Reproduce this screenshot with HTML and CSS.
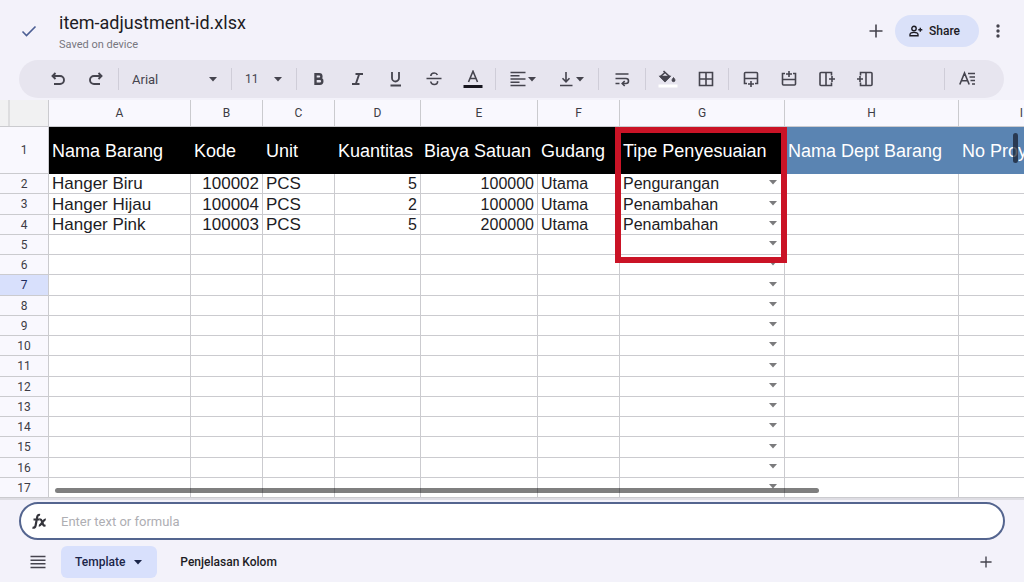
FILE: index.html
```html
<!DOCTYPE html>
<html lang="id">
<head>
<meta charset="utf-8">
<meta name="viewport" content="width=device-width, initial-scale=1">
<title>item-adjustment-id.xlsx</title>
<link rel="stylesheet" href="styles.css">
</head>
<body>
<svg class="defs" aria-hidden="true">
  <symbol id="caret" viewBox="0 0 10 5"><path d="M1 0h8L5 4.600z" fill="currentColor"/></symbol>
  <symbol id="plus" viewBox="0 0 14 14"><path d="M7 .5v13M.5 7h13"/></symbol>
</svg>

<header class="topbar">
  <button class="icon-btn done" aria-label="Done"><svg class="icon" viewBox="0 0 16 16"><path d="M1.500 8.500l4 4L14.500 3.500"/></svg></button>
  <div class="file">
    <h1 class="file-name">item-adjustment-id.xlsx</h1>
    <p class="file-status">Saved on device</p>
  </div>
  <button class="icon-btn" aria-label="Insert"><svg class="icon plus"><use href="#plus"/></svg></button>
  <button class="share">
    <svg class="icon share-icon" viewBox="0 0 14 12"><circle cx="5" cy="3.500" r="2.200"/><path d="M1 10.800V9.600C1 8.200 3 7.400 5 7.400s4 .8 4 2.200v1.200zM11.300 2.800v4M9.300 4.800h4"/></svg>
    <span>Share</span>
  </button>
  <button class="icon-btn more" aria-label="More options"><svg class="icon" viewBox="0 0 16 16"><g fill="currentColor" stroke="none"><circle cx="8" cy="3" r="1.700"/><circle cx="8" cy="8" r="1.700"/><circle cx="8" cy="13" r="1.700"/></g></svg></button>
</header>

<div class="toolbar" role="toolbar" aria-label="Formatting">
  <button class="tool" aria-label="Undo"><svg class="icon" viewBox="0 0 16 16"><path stroke-width="1.900" d="M5.500 2L2.500 5l3 3M2.500 5H10a4 4 0 0 1 0 8H4"/></svg></button>
  <button class="tool" aria-label="Redo"><svg class="icon" viewBox="0 0 16 16"><path stroke-width="1.900" d="M10.500 2l3 3-3 3M13.500 5H6a4 4 0 0 0 0 8h6"/></svg></button>
  <span class="sep"></span>
  <div class="picker font"><select aria-label="Font"><option>Arial</option></select><svg class="caret"><use href="#caret"/></svg></div>
  <span class="sep"></span>
  <div class="picker size"><select aria-label="Font size"><option>11</option></select><svg class="caret"><use href="#caret"/></svg></div>
  <span class="sep"></span>
  <div class="styles">
    <button class="tool" aria-label="Bold"><svg class="icon" viewBox="0 0 16 16"><path stroke-width="2.400" d="M4.500 3.300h3.700a2.200 2.200 0 0 1 0 4.400H4.500zM4.500 7.700h4.300a2.500 2.500 0 0 1 0 5H4.500z"/></svg></button>
    <button class="tool" aria-label="Italic"><svg class="icon" viewBox="0 0 16 16"><path stroke-width="1.900" d="M5.500 3H13M2 13h7.500M9.200 3l-3.400 10"/></svg></button>
    <button class="tool" aria-label="Underline"><svg class="icon" viewBox="0 0 16 16"><path stroke-width="1.800" d="M4 1v6a3.500 3.500 0 0 0 7 0V1M2.500 14.500H13"/></svg></button>
    <button class="tool" aria-label="Strikethrough"><svg class="icon" viewBox="0 0 16 16"><path d="M.5 7.500h15M4.800 5C5 3 6.300 2 8.200 2c1.600 0 2.700.7 3.200 2M4.700 10.500c.3 2 1.700 3 3.600 3 2.200 0 3.600-1.300 3.200-3.300"/></svg></button>
    <button class="tool" aria-label="Text colour"><svg class="icon text-colour" viewBox="0 0 20 18"><path d="M5.500 12L10 1.300 14.500 12M7 8.500h6"/><path stroke="#17161f" stroke-width="3" d="M.5 16.500h19"/></svg></button>
  </div>
  <span class="sep"></span>
  <button class="tool menu" aria-label="Horizontal align"><svg class="icon" viewBox="0 0 16 16"><path d="M.5 1.500h15M.5 4.700h9M.5 8h15M.5 11.200h9M.5 14.500h15"/></svg><svg class="caret"><use href="#caret"/></svg></button>
  <button class="tool menu" aria-label="Vertical align"><svg class="icon" viewBox="0 0 16 16"><path d="M8 1v9.500M4.500 7.300L8 10.800l3.500-3.500M2 14.500h12.500"/></svg><svg class="caret"><use href="#caret"/></svg></button>
  <span class="sep"></span>
  <button class="tool wrap" aria-label="Text wrapping"><svg class="icon" viewBox="0 0 16 16"><path d="M1.500 3h13M1.500 7.500H12a2.500 2.500 0 0 1 0 5H8.500M1.500 12.500h4M10.700 10l-2.500 2.500 2.500 2.500"/></svg></button>
  <span class="sep"></span>
  <button class="tool" aria-label="Fill colour"><svg class="icon fill" viewBox="0 0 20 18"><path d="M5.500 1l6 5.500-4.500 4.500-4.500-4.500L7 2.500" stroke-width="1.600"/><path d="M2.500 6.500h9L7 11z" fill="currentColor"/><path d="M15.500 7.500c1 1.300 1.500 2 1.500 2.700a1.500 1.500 0 0 1-3 0c0-.7.5-1.400 1.500-2.700z" fill="currentColor" stroke-width=".8"/><path stroke="#fff" stroke-width="3" d="M.5 16h19"/></svg></button>
  <button class="tool" aria-label="Borders"><svg class="icon" viewBox="0 0 16 16"><path d="M1.500 1.500h13v13h-13zM8 1.500v13M1.500 8h13"/></svg></button>
  <span class="sep"></span>
  <button class="tool" aria-label="Insert row below"><svg class="icon" viewBox="0 0 16 16"><path d="M4 12.500H1.500v-10q0-1 1-1h11q1 0 1 1v10H12M1.500 7.500h13M8 10v6M5 13h6"/></svg></button>
  <button class="tool" aria-label="Insert row above"><svg class="icon" viewBox="0 0 16 16"><path d="M4 2.500H1.500v10.500q0 1 1 1h11q1 0 1-1V2.500H12M1.500 8.500h13M8 0v6M5 3h6"/></svg></button>
  <button class="tool" aria-label="Insert column right"><svg class="icon" viewBox="0 0 16 16"><path d="M12.500 4.500v-3H2q-1 0-1 1v11q0 1 1 1h10.500v-3M7 1.500v13M10 8h6M13 5v6"/></svg></button>
  <button class="tool" aria-label="Insert column left"><svg class="icon" viewBox="0 0 16 16"><path d="M3.500 4.500v-3H14q1 0 1 1v11q0 1-1 1H3.500v-3M9 1.500v13M0 8h6M3 5v6"/></svg></button>
  <span class="sep last"></span>
  <button class="tool" aria-label="Text format"><svg class="icon" viewBox="0 0 16 16"><path d="M.8 13.500L5.500 2l4.700 11.500M2.500 9.800h6M9 2.500h7M10.500 6h5.500M11.500 9.500H16M13 13h3" /></svg></button>
</div>

<main class="sheet">
  <table class="grid">
    <colgroup><col class="c-num"><col class="c-a"><col class="c-b"><col class="c-b"><col class="c-d"><col class="c-e"><col class="c-f"><col class="c-g"><col class="c-h"><col class="c-i"></colgroup>
    <thead>
      <tr><td class="corner"></td><th>A</th><th>B</th><th>C</th><th>D</th><th>E</th><th>F</th><th>G</th><th>H</th><th>I</th></tr>
    </thead>
    <tbody>
      <tr class="titles"><th>1</th><td>Nama Barang</td><td>Kode</td><td>Unit</td><td>Kuantitas</td><td>Biaya Satuan</td><td>Gudang</td><td>Tipe Penyesuaian</td><td class="optional">Nama Dept Barang</td><td class="optional">No Proyek</td></tr>
      <tr><th>2</th><td class="big">Hanger Biru</td><td class="big num">100002</td><td class="big">PCS</td><td class="num">5</td><td class="num">100000</td><td>Utama</td><td><button class="choice">Pengurangan<svg class="caret"><use href="#caret"/></svg></button></td><td></td><td></td></tr>
      <tr><th>3</th><td class="big">Hanger Hijau</td><td class="big num">100004</td><td class="big">PCS</td><td class="num">2</td><td class="num">100000</td><td>Utama</td><td><button class="choice">Penambahan<svg class="caret"><use href="#caret"/></svg></button></td><td></td><td></td></tr>
      <tr><th>4</th><td class="big">Hanger Pink</td><td class="big num">100003</td><td class="big">PCS</td><td class="num">5</td><td class="num">200000</td><td>Utama</td><td><button class="choice">Penambahan<svg class="caret"><use href="#caret"/></svg></button></td><td></td><td></td></tr>
      <tr><th>5</th><td></td><td></td><td></td><td></td><td></td><td></td><td><button class="choice" aria-label="Choose"><svg class="caret"><use href="#caret"/></svg></button></td><td></td><td></td></tr>
      <tr><th>6</th><td></td><td></td><td></td><td></td><td></td><td></td><td><button class="choice" aria-label="Choose"><svg class="caret"><use href="#caret"/></svg></button></td><td></td><td></td></tr>
      <tr><th class="active">7</th><td></td><td></td><td></td><td></td><td></td><td></td><td><button class="choice" aria-label="Choose"><svg class="caret"><use href="#caret"/></svg></button></td><td></td><td></td></tr>
      <tr><th>8</th><td></td><td></td><td></td><td></td><td></td><td></td><td><button class="choice" aria-label="Choose"><svg class="caret"><use href="#caret"/></svg></button></td><td></td><td></td></tr>
      <tr><th>9</th><td></td><td></td><td></td><td></td><td></td><td></td><td><button class="choice" aria-label="Choose"><svg class="caret"><use href="#caret"/></svg></button></td><td></td><td></td></tr>
      <tr><th>10</th><td></td><td></td><td></td><td></td><td></td><td></td><td><button class="choice" aria-label="Choose"><svg class="caret"><use href="#caret"/></svg></button></td><td></td><td></td></tr>
      <tr><th>11</th><td></td><td></td><td></td><td></td><td></td><td></td><td><button class="choice" aria-label="Choose"><svg class="caret"><use href="#caret"/></svg></button></td><td></td><td></td></tr>
      <tr><th>12</th><td></td><td></td><td></td><td></td><td></td><td></td><td><button class="choice" aria-label="Choose"><svg class="caret"><use href="#caret"/></svg></button></td><td></td><td></td></tr>
      <tr><th>13</th><td></td><td></td><td></td><td></td><td></td><td></td><td><button class="choice" aria-label="Choose"><svg class="caret"><use href="#caret"/></svg></button></td><td></td><td></td></tr>
      <tr><th>14</th><td></td><td></td><td></td><td></td><td></td><td></td><td><button class="choice" aria-label="Choose"><svg class="caret"><use href="#caret"/></svg></button></td><td></td><td></td></tr>
      <tr><th>15</th><td></td><td></td><td></td><td></td><td></td><td></td><td><button class="choice" aria-label="Choose"><svg class="caret"><use href="#caret"/></svg></button></td><td></td><td></td></tr>
      <tr><th>16</th><td></td><td></td><td></td><td></td><td></td><td></td><td><button class="choice" aria-label="Choose"><svg class="caret"><use href="#caret"/></svg></button></td><td></td><td></td></tr>
      <tr><th>17</th><td></td><td></td><td></td><td></td><td></td><td></td><td><button class="choice" aria-label="Choose"><svg class="caret"><use href="#caret"/></svg></button></td><td></td><td></td></tr>
    </tbody>
  </table>
  <div class="highlight"></div>
  <div class="thumb thumb-x"></div>
  <div class="thumb thumb-y"></div>
</main>

<label class="formula">
  <svg class="fx" viewBox="0 0 16 16" role="img" aria-label="Formula"><path stroke-width="2.200" d="M9 2C7.500 1.500 6.600 2 6.200 4L4.600 12.500C4.200 14.500 3 15 1.500 14.500M2.500 6.500h6"/><path stroke-width="2.200" d="M8.500 6.300c1.500-.3 2 .5 2.600 2.300l.8 2.500c.5 1.500 1.200 1.700 2.600 1.200M14.800 6.500c-2.500-.5-4.500 6.500-7 6"/></svg>
  <input type="text" placeholder="Enter text or formula">
</label>

<nav class="tabs" aria-label="Sheets">
  <button class="icon-btn" aria-label="All sheets"><svg class="icon" viewBox="0 0 16 16"><path d="M.5 2.500h15M.5 6.200h15M.5 9.800h15M.5 13.500h15"/></svg></button>
  <button class="tab selected">Template<svg class="caret"><use href="#caret"/></svg></button>
  <button class="tab">Penjelasan Kolom</button>
  <button class="icon-btn add" aria-label="Add sheet"><svg class="icon add-icon"><use href="#plus"/></svg></button>
</nav>
</body>
</html>
```
FILE: styles.css
```css
* {
  box-sizing: border-box;
}

body {
  display: flex;
  flex-direction: column;
  height: 100vh;
  margin: 0;
  overflow: hidden;
  background: #f3f2fa;
  color: #1d1c24;
  font-family: Roboto, "Noto Sans", sans-serif;
}

button,
select,
input {
  padding: 0;
  border: 0;
  background: none;
  color: inherit;
  font: inherit;
}

.defs {
  position: absolute;
  width: 0;
  height: 0;
}

.icon {
  flex: none;
  width: 16px;
  height: 16px;
  fill: none;
  stroke: currentColor;
  stroke-width: 1.6;
}

.caret {
  flex: none;
  width: 10px;
  height: 5px;
}

.icon-btn {
  display: flex;
  flex: none;
  align-items: center;
  justify-content: center;
  width: 38px;
  height: 32px;
  color: #45444e;
}

/* Top bar */
.topbar {
  display: flex;
  flex: none;
  align-items: center;
  height: 60px;
  padding: 2px 7px 0 10px;
}

.done {
  color: #4c5f94;
}

.file {
  flex: 1;
  padding: 2px 0 0 11px;
}

.file-name {
  margin: 0;
  font-size: 18px;
  font-weight: 400;
  line-height: 24px;
}

.file-status {
  margin: 2px 0 0;
  color: #77767e;
  font-size: 11px;
  line-height: 16px;
}

.plus {
  width: 14px;
  height: 14px;
}

.share {
  display: flex;
  align-items: center;
  justify-content: center;
  gap: 6px;
  width: 84px;
  height: 32px;
  padding: 0 5px 0 0;
  border-radius: 16px;
  background: #dae1f9;
  font-size: 12px;
  font-weight: 500;
}

.share-icon {
  width: 14px;
  height: 12px;
  stroke-width: 1.4;
}

/* Formatting toolbar */
.toolbar {
  display: flex;
  flex: none;
  align-items: center;
  height: 38px;
  margin: 0 20px 2px 19px;
  padding: 0 18px 0 20px;
  border-radius: 19px;
  background: #e7e5ef;
  color: #45444e;
}

.tool {
  display: flex;
  flex: none;
  align-items: center;
  justify-content: center;
  width: 38px;
  height: 38px;
}

.sep {
  flex: none;
  width: 1px;
  height: 22px;
  margin: 0 3px;
  background: #cfcdd8;
}

.sep.last {
  margin-left: auto;
}

.picker {
  display: flex;
  align-items: center;
  padding: 0 10px;
  font-size: 13px;
}

.picker select {
  flex: 1;
  min-width: 0;
  appearance: none;
}

.font {
  width: 106px;
}

.size {
  width: 58px;
  font-size: 12px;
}

.styles {
  display: grid;
  grid-template-columns: repeat(5, 1fr);
  justify-items: center;
  width: 192px;
}

.menu {
  gap: 1px;
  width: 48px;
}

.wrap {
  width: 40px;
}

.text-colour,
.fill {
  width: 20px;
  height: 18px;
}

/* Spreadsheet */
.sheet {
  position: relative;
  flex: 1;
  min-height: 0;
  overflow: hidden;
  border-bottom: 2px solid #dedde3;
  background: #fff;
}

.grid {
  width: 1085px;
  table-layout: fixed;
  border-spacing: 0;
  font-family: "Liberation Sans", Arial, sans-serif;
  font-size: 16px;
}

.c-num { width: 49px; }
.c-a { width: 142px; }
.c-b { width: 72px; }
.c-d { width: 86px; }
.c-e { width: 117px; }
.c-f { width: 82px; }
.c-g { width: 165px; }
.c-h { width: 174px; }
.c-i { width: 126px; }

.grid th,
.grid td {
  height: 20px;
  padding: 0 3px;
  border-right: 1px solid #cbcbcf;
  border-bottom: 1px solid #cbcbcf;
  line-height: 18px;
  white-space: nowrap;
}

.grid tbody td {
  padding-top: 1px;
}

.grid tbody tr:nth-child(4n + 3) > * {
  height: 21px;
}

.grid th {
  padding: 0;
  background: #f9f8fe;
  color: #3d3c45;
  font-family: Roboto, "Noto Sans", sans-serif;
  font-size: 12px;
  font-weight: 400;
  text-align: center;
}

.grid thead th,
.grid .corner {
  height: 27px;
}

.grid .corner {
  background: linear-gradient(90deg, transparent 8px, #dddddf 8px, #dddddf 10px, transparent 10px) #f1f1f2;
}

.grid .active {
  background: #d8e0fc;
  color: #1e2b5c;
}

.grid .titles > * {
  height: 47px;
}

.grid .titles td {
  border-color: #000;
  background: #000;
  color: #fff;
  font-size: 18px;
}

.grid .titles .optional {
  border-color: #5a84b2;
  background: #5a84b2;
}

.grid .big {
  font-size: 17px;
}

.grid .num {
  text-align: right;
}

.choice {
  display: flex;
  align-items: center;
  width: 100%;
  height: 18px;
}

.choice .caret {
  margin: 0 3px 3px auto;
  color: #7b7b7d;
}

.highlight {
  position: absolute;
  top: 27px;
  left: 615px;
  width: 172px;
  height: 136px;
  border: 6px solid #ca1326;
}

.thumb {
  position: absolute;
  border-radius: 3px;
  background: rgba(0, 0, 0, 0.5);
}

.thumb-x {
  right: 20%;
  bottom: 5px;
  left: 55px;
  height: 5px;
}

.thumb-y {
  top: 33px;
  right: 6px;
  width: 5px;
  height: 30px;
  background: rgba(20, 25, 40, 0.7);
}

/* Formula bar */
.formula {
  display: flex;
  flex: none;
  align-items: center;
  gap: 14px;
  height: 38px;
  margin: 2px 19px 0;
  padding: 0 20px 0 10px;
  border: 2px solid #54658f;
  border-radius: 19px;
  background: #fff;
}

.fx {
  flex: none;
  width: 16px;
  height: 16px;
  fill: none;
  stroke: #34343b;
}

.formula input {
  flex: 1;
  min-width: 0;
  outline: 0;
  font-size: 13px;
}

.formula input::placeholder {
  color: #aeaeb3;
}

/* Sheet tabs */
.tabs {
  display: flex;
  flex: none;
  align-items: center;
  height: 42px;
  padding: 2px 19px 0;
}

.tab {
  display: flex;
  align-items: center;
  justify-content: center;
  gap: 8px;
  height: 32px;
  padding: 0 15px;
  border-radius: 6px;
  font-size: 12px;
  font-weight: 500;
}

.tab.selected {
  margin: 0 8px 0 4px;
  padding: 0 14px;
  background: #d8e0fc;
  color: #1b2549;
}

.add {
  margin-left: auto;
}

.add-icon {
  width: 12px;
  height: 12px;
}
```
